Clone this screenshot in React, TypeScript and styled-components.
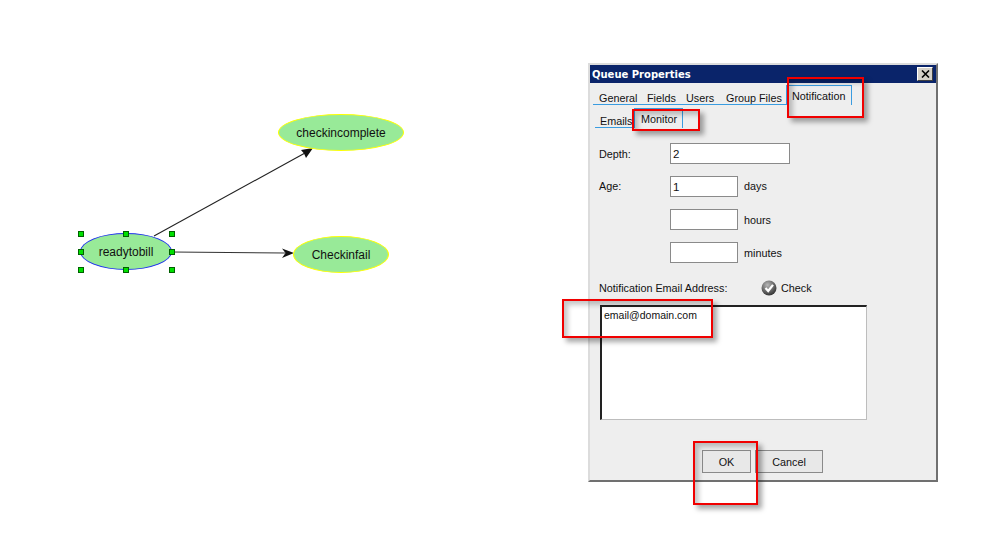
import React from 'react'
import styled, { createGlobalStyle } from 'styled-components'

const GlobalStyle = createGlobalStyle`
  html, body {
    margin: 0;
    background: #fff;
  }
  body {
    font-family: 'Liberation Sans', Arial, sans-serif;
    font-size: 10.8px;
    color: #111;
  }
`

const Page = styled.div`
  display: flex;
  width: 992px;
  height: 536px;
  overflow: hidden;
`

/* diagram side: node places are the content here */
const Canvas = styled.div`
  position: relative;
  flex: 0 0 588px;
  height: 536px;
`

const Edges = styled.svg`
  position: absolute;
  inset: 0;
`

const Node = styled.div<{ $x: number; $y: number; $w: number; $selected?: boolean }>`
  position: absolute;
  left: ${({ $x }) => $x}px;
  top: ${({ $y }) => $y}px;
  width: ${({ $w }) => $w}px;
  height: 37px;
  box-sizing: border-box;
  display: flex;
  align-items: center;
  justify-content: center;
  border-radius: 50%;
  background: #98ea98;
  border: ${({ $selected }) => ($selected ? '1.5px solid #2030f0' : '1.5px solid #ffff00')};
  font-size: 12px;
`

const Handle = styled.span<{ $x: number; $y: number }>`
  position: absolute;
  left: ${({ $x }) => $x}px;
  top: ${({ $y }) => $y}px;
  width: 6px;
  height: 6px;
  box-sizing: border-box;
  background: #00e000;
  border: 1px solid #006000;
`

const Dialog = styled.div`
  position: relative;
  flex: 0 0 350px;
  box-sizing: border-box;
  height: 419px;
  margin-top: 63px;
  background: #eeeeee;
  border: 2px solid;
  border-color: #dcdcdc #707070 #707070 #dcdcdc;
  display: flex;
  flex-direction: column;
`

const TitleBar = styled.div`
  height: 18px;
  flex: none;
  background: #0a246a;
  color: #fff;
  font-family: 'DejaVu Sans', sans-serif;
  font-weight: bold;
  font-size: 10px;
  display: flex;
  align-items: center;
  justify-content: space-between;
  padding: 0 3px 0 2px;
`

const CloseButton = styled.span`
  width: 16px;
  height: 14px;
  box-sizing: border-box;
  background: #d4d0c8;
  border: 1px solid;
  border-color: #fff #404040 #404040 #fff;
  display: flex;
  align-items: center;
  justify-content: center;
`

const TabRow = styled.div<{ $left: number; $top: number }>`
  display: flex;
  align-items: flex-end;
  height: 22px;
  flex: none;
  margin: ${({ $top }) => $top}px 0 0 ${({ $left }) => $left}px;
`

const Tab = styled.div<{ $w: number; $active?: boolean; $pad?: number }>`
  flex: none;
  width: ${({ $w }) => $w}px;
  height: ${({ $active }) => ($active ? 20 : 14)}px;
  box-sizing: border-box;
  border-bottom: ${({ $active }) => ($active ? 'none' : '1px solid #3a9ce0')};
  border-top: ${({ $active }) => ($active ? '1px solid #3a9ce0' : 'none')};
  border-left: ${({ $active }) => ($active ? '1px solid #3a9ce0' : 'none')};
  border-right: ${({ $active }) => ($active ? '1px solid #3a9ce0' : 'none')};
  padding-left: ${({ $pad }) => $pad ?? 6}px;
  padding-top: ${({ $active }) => ($active ? 4 : 1)}px;
  line-height: 12px;
  white-space: nowrap;
`

const Form = styled.div`
  flex: 1;
  display: flex;
  flex-direction: column;
  padding: 15px 0 0 9px;
`

const FieldRow = styled.div<{ $gap?: number }>`
  display: flex;
  align-items: center;
  height: 21px;
  margin-bottom: ${({ $gap }) => $gap ?? 12}px;
`

const FieldLabel = styled.div<{ $dy?: number }>`
  flex: 0 0 71px;
  margin-top: ${({ $dy }) => $dy ?? -2}px;
`

const Input = styled.div<{ $w: number }>`
  width: ${({ $w }) => $w}px;
  height: 21px;
  box-sizing: border-box;
  background: #fff;
  border: 1px solid #8a8a8a;
  padding: 0 2px;
  line-height: 20px;
  font-size: 11.5px;
`

const Unit = styled.div<{ $dy?: number }>`
  margin: ${({ $dy }) => $dy ?? -2}px 0 0 6px;
`

const EmailRow = styled.div`
  display: flex;
  align-items: center;
  height: 18px;
  margin-top: 5px;
`

const EmailLabel = styled.div`
  flex: 0 0 162px;
`

const CheckLink = styled.div`
  display: flex;
  align-items: center;
  gap: 4px;
`

const EmailBox = styled.div`
  width: 267px;
  height: 115px;
  box-sizing: border-box;
  margin: 8px 0 0 1px;
  background: #fff;
  border: 1px solid #bdbdbd;
  border-top: 2px solid #222;
  border-left: 2px solid #222;
  padding: 2px 2px;
  line-height: 13px;
  font-size: 10.5px;
`

const Buttons = styled.div`
  display: flex;
  margin: 30px 0 0 103px;
`

const Button = styled.div<{ $w: number; $ml?: number }>`
  width: ${({ $w }) => $w}px;
  height: 23px;
  margin-left: ${({ $ml }) => $ml ?? 0}px;
  box-sizing: border-box;
  border: 1px solid #8a8a8a;
  background: #e8e8e8;
  display: flex;
  align-items: center;
  justify-content: center;
`

/* red callouts pasted over the dialog */
const Callout = styled.div<{ $x: number; $y: number; $w: number; $h: number }>`
  position: absolute;
  left: ${({ $x }) => $x}px;
  top: ${({ $y }) => $y}px;
  width: ${({ $w }) => $w}px;
  height: ${({ $h }) => $h}px;
  box-sizing: border-box;
  border: 2px solid #f00000;
  box-shadow: 4px 4px 5px rgba(0, 0, 0, 0.35), inset 4px 4px 5px rgba(0, 0, 0, 0.22);
  pointer-events: none;
`

const CheckIcon = () => (
  <svg width="16" height="16" viewBox="0 0 16 16">
    <defs>
      <radialGradient id="ball" cx="40%" cy="30%" r="75%">
        <stop offset="0" stopColor="#b8b8b8" />
        <stop offset="1" stopColor="#2c2c2c" />
      </radialGradient>
    </defs>
    <circle cx="8" cy="8" r="7.5" fill="url(#ball)" />
    <path d="M4.5 8 L7.2 11 L12 4.8" fill="none" stroke="#fff" strokeWidth="2.2" />
  </svg>
)

const App: React.FC = () => (
  <>
    <GlobalStyle />
    <Page>
      <Canvas>
        <Edges width="588" height="536">
          <line x1="154" y1="236" x2="305" y2="153" stroke="#222" strokeWidth="1.1" />
          <polygon points="313,148 301,150 304,153.5 306,158" fill="#111" />
          <line x1="172" y1="252" x2="285" y2="253" stroke="#333" strokeWidth="1.2" />
          <polygon points="294,253 282,248.5 285.5,253 282,258" fill="#111" />
        </Edges>
        <Node $x={278} $y={114} $w={126}>checkincomplete</Node>
        <Node $x={80} $y={233} $w={92} $selected>readytobill</Node>
        <Node $x={293} $y={236} $w={96}>Checkinfail</Node>
        <Handle $x={78} $y={231} />
        <Handle $x={123} $y={231} />
        <Handle $x={169} $y={231} />
        <Handle $x={78} $y={249} />
        <Handle $x={169} $y={249} />
        <Handle $x={78} $y={267} />
        <Handle $x={123} $y={267} />
        <Handle $x={169} $y={267} />
      </Canvas>
      <Dialog>
        <TitleBar>
          Queue Properties
          <CloseButton>
            <svg width="9" height="8" viewBox="0 0 9 8">
              <path d="M1 0.5 L8 7.5 M8 0.5 L1 7.5" stroke="#000" strokeWidth="1.6" />
            </svg>
          </CloseButton>
        </TitleBar>
        <TabRow $left={3} $top={0}>
          <Tab $w={48}>General</Tab>
          <Tab $w={39}>Fields</Tab>
          <Tab $w={40}>Users</Tab>
          <Tab $w={66}>Group Files</Tab>
          <Tab $w={66} $active $pad={5}>Notification</Tab>
        </TabRow>
        <TabRow $left={5} $top={1}>
          <Tab $w={39} $pad={5}>Emails</Tab>
          <Tab $w={49} $active>Monitor</Tab>
        </TabRow>
        <Form>
          <FieldRow>
            <FieldLabel $dy={0}>Depth:</FieldLabel>
            <Input $w={120}>2</Input>
          </FieldRow>
          <FieldRow>
            <FieldLabel>Age:</FieldLabel>
            <Input $w={68}>1</Input>
            <Unit>days</Unit>
          </FieldRow>
          <FieldRow>
            <FieldLabel />
            <Input $w={68} />
            <Unit $dy={0}>hours</Unit>
          </FieldRow>
          <FieldRow $gap={11}>
            <FieldLabel />
            <Input $w={68} />
            <Unit $dy={0}>minutes</Unit>
          </FieldRow>
          <EmailRow>
            <EmailLabel>Notification Email Address:</EmailLabel>
            <CheckLink>
              <CheckIcon />
              Check
            </CheckLink>
          </EmailRow>
          <EmailBox>email@domain.com</EmailBox>
          <Buttons>
            <Button $w={49}>OK</Button>
            <Button $w={68} $ml={4}>Cancel</Button>
          </Buttons>
        </Form>
        <Callout $x={197} $y={12} $w={77} $h={41} />
        <Callout $x={42} $y={44} $w={68} $h={22} />
        <Callout $x={-28} $y={234} $w={151} $h={39} />
        <Callout $x={103} $y={376} $w={65} $h={64} />
      </Dialog>
    </Page>
  </>
)

export default App
